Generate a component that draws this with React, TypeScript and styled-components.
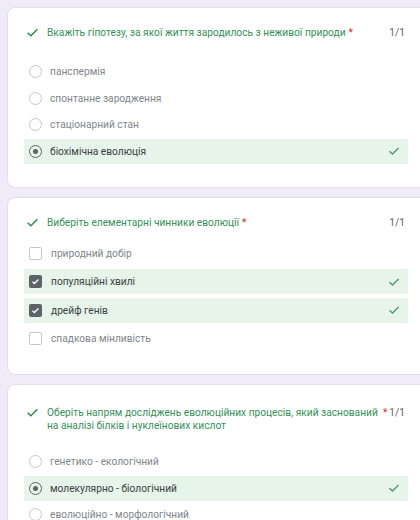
import React from "react";
import styled, { createGlobalStyle } from "styled-components";

const Global = createGlobalStyle`
  html, body { margin: 0; padding: 0; background: #f0ebf8; }
  body { font-family: Roboto, "Noto Sans", Arial, sans-serif; }
`;

const Page = styled.div`
  display: flex;
  flex-direction: column;
  gap: 9px;
  padding: 7px 0 0 7px;
  width: 420px;
  height: 520px;
  box-sizing: border-box;
  overflow: hidden;
`;

const Card = styled.section<{ $top: number; $gap: number }>`
  background: #fff;
  border: 1px solid #e3deec;
  border-right: none;
  border-radius: 8px 0 0 8px;
  padding: ${(p) => p.$top}px 12px 23px 16px;
  display: flex;
  flex-direction: column;
  gap: ${(p) => p.$gap}px;
`;

const TitleRow = styled.div`
  display: flex;
  align-items: flex-start;
  padding: 0 3px 0 2px;
  font-size: 10.2px;
  line-height: 13px;
`;

const TitleCheck = styled.svg`
  width: 13px;
  height: 13px;
  flex: none;
  margin-right: 8px;
`;

const TitleText = styled.div`
  color: #35915a;
  flex: 0 1 auto;
`;

const Asterisk = styled.span`
  color: #d93025;
  margin-left: 3px;
  flex: none;
`;

const Score = styled.span`
  margin-left: auto;
  padding-left: 2px;
  color: #5f6368;
  flex: none;
`;

const Options = styled.div<{ $gap: number }>`
  display: flex;
  flex-direction: column;
  gap: ${(p) => p.$gap}px;
`;

const OptionRow = styled.div<{ $correct?: boolean }>`
  display: flex;
  align-items: center;
  height: 25px;
  padding: 0 8px 0 5px;
  background: ${(p) => (p.$correct ? "#e6f4ea" : "transparent")};
  font-size: 10.2px;
  color: ${(p) => (p.$correct ? "#3c4043" : "#80868b")};
`;

const Radio = styled.span<{ $on?: boolean }>`
  width: 13px;
  height: 13px;
  box-sizing: border-box;
  border-radius: 50%;
  border: 1.5px solid ${(p) => (p.$on ? "#5f6368" : "#c4c7c9")};
  display: flex;
  align-items: center;
  justify-content: center;
  margin-right: 8px;
  flex: none;
  &::after {
    content: "";
    display: ${(p) => (p.$on ? "block" : "none")};
    width: 5px;
    height: 5px;
    border-radius: 50%;
    background: #5f6368;
  }
`;

const Box = styled.span<{ $on?: boolean }>`
  width: 13px;
  height: 13px;
  box-sizing: border-box;
  border-radius: 2px;
  border: ${(p) => (p.$on ? "none" : "1.5px solid #c4c7c9")};
  background: ${(p) => (p.$on ? "#5f6368" : "transparent")};
  display: flex;
  align-items: center;
  justify-content: center;
  margin-right: 9px;
  flex: none;
`;

const Label = styled.span`
  flex: 1;
`;

const RowCheck = styled.svg`
  width: 12px;
  height: 12px;
  flex: none;
`;

const Check = ({ color = "#2e8b4e", as }: { color?: string; as: "title" | "row" }) => {
  const C = as === "title" ? TitleCheck : RowCheck;
  return (
    <C viewBox="0 0 24 24">
      <path d="M3 12.5l6 5.5L21 6" fill="none" stroke={color} strokeWidth="2.8" />
    </C>
  );
};

type Opt = { label: string; on?: boolean; correct?: boolean };
type Q = { title: string; kind: "radio" | "check"; opts: Opt[]; top: number; gap: number; optGap: number };

const questions: Q[] = [
  {
    title: "Вкажіть гіпотезу, за якої життя зародилось з неживої природи",
    kind: "radio",
    top: 18,
    gap: 20,
    optGap: 1.5,
    opts: [
      { label: "панспермія" },
      { label: "спонтанне зародження" },
      { label: "стаціонарний стан" },
      { label: "біохімічна еволюція", on: true, correct: true },
    ],
  },
  {
    title: "Виберіть елементарні чинники еволюції",
    kind: "check",
    top: 18,
    gap: 12,
    optGap: 3.5,
    opts: [
      { label: "природний добір" },
      { label: "популяційні хвилі", on: true, correct: true },
      { label: "дрейф генів", on: true, correct: true },
      { label: "спадкова мінливість" },
    ],
  },
  {
    title: "Оберіть напрям досліджень еволюційних процесів, який заснований на аналізі білків і нуклеїнових кислот",
    kind: "radio",
    top: 21,
    gap: 17,
    optGap: 1.5,
    opts: [
      { label: "генетико - екологічний" },
      { label: "молекулярно - біологічний", on: true, correct: true },
      { label: "еволюційно - морфологічний" },
    ],
  },
];

export default function App() {
  return (
    <>
      <Global />
      <Page>
        {questions.map((q, i) => (
          <Card key={i} $top={q.top} $gap={q.gap}>
            <TitleRow>
              <Check as="title" />
              <TitleText>{q.title}</TitleText>
              <Asterisk>*</Asterisk>
              <Score>1/1</Score>
            </TitleRow>
            <Options $gap={q.optGap}>
              {q.opts.map((o, j) => (
                <OptionRow key={j} $correct={o.correct}>
                  {q.kind === "radio" ? (
                    <Radio $on={o.on} />
                  ) : (
                    <Box $on={o.on}>
                      {o.on && (
                        <svg width="9" height="9" viewBox="0 0 24 24">
                          <path d="M4 12.5l5 5L20 6.5" fill="none" stroke="#fff" strokeWidth="3.5" />
                        </svg>
                      )}
                    </Box>
                  )}
                  <Label>{o.label}</Label>
                  {o.correct && <Check as="row" color="#4a9d68" />}
                </OptionRow>
              ))}
            </Options>
          </Card>
        ))}
      </Page>
    </>
  );
}
